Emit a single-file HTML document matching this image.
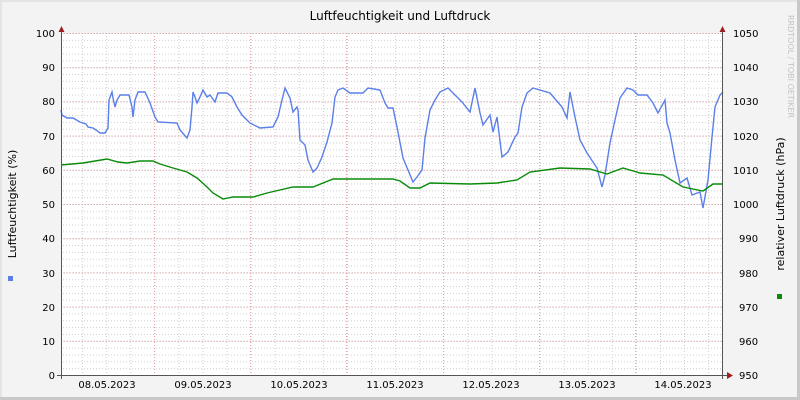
<!DOCTYPE html>
<html><head><meta charset="utf-8"><style>
html,body{margin:0;padding:0;width:800px;height:400px;overflow:hidden;background:#f3f3f3}
svg{display:block}
text{font-family:"DejaVu Sans","Liberation Sans",sans-serif;font-size:10px;fill:#000}
</style></head><body>
<svg width="800" height="400" viewBox="0 0 800 400" xmlns="http://www.w3.org/2000/svg">
<defs>
<pattern id="hmin" x="0" y="33" width="800" height="6.84" patternUnits="userSpaceOnUse">
<line x1="0" y1="0.5" x2="800" y2="0.5" stroke="#cfcfcf" stroke-width="1" stroke-dasharray="1,2"/>
</pattern>
<pattern id="vmin" x="58" y="0" width="24.08" height="400" patternUnits="userSpaceOnUse">
<line x1="0.5" y1="0" x2="0.5" y2="400" stroke="#cfcfcf" stroke-width="1" stroke-dasharray="1,2"/>
</pattern>
</defs>
<rect x="0" y="0" width="800" height="400" fill="#f3f3f3"/>
<rect x="0" y="0" width="800" height="2" fill="#e4e4e4"/>
<rect x="0" y="0" width="2" height="400" fill="#e4e4e4"/>
<rect x="797" y="0" width="3" height="400" fill="#c8c8c8"/>
<rect x="0" y="397" width="800" height="3" fill="#c8c8c8"/>
<rect x="61" y="33" width="662" height="342" fill="#fff"/>
<rect x="61" y="33" width="662" height="342" fill="url(#hmin)"/>
<rect x="61" y="33" width="662" height="342" fill="url(#vmin)"/>
<g stroke="#e9a5a5" stroke-width="1" stroke-dasharray="1,2">
<line x1="61" y1="33.5" x2="723" y2="33.5"/><line x1="61" y1="67.7" x2="723" y2="67.7"/>
<line x1="61" y1="101.9" x2="723" y2="101.9"/><line x1="61" y1="136.1" x2="723" y2="136.1"/>
<line x1="61" y1="170.3" x2="723" y2="170.3"/><line x1="61" y1="204.5" x2="723" y2="204.5"/>
<line x1="61" y1="238.7" x2="723" y2="238.7"/><line x1="61" y1="272.9" x2="723" y2="272.9"/>
<line x1="61" y1="307.1" x2="723" y2="307.1"/><line x1="61" y1="341.3" x2="723" y2="341.3"/>
<line x1="154.5" y1="33" x2="154.5" y2="375"/><line x1="250.5" y1="33" x2="250.5" y2="375"/>
<line x1="346.5" y1="33" x2="346.5" y2="375"/><line x1="443.5" y1="33" x2="443.5" y2="375"/>
<line x1="539.5" y1="33" x2="539.5" y2="375"/><line x1="635.5" y1="33" x2="635.5" y2="375"/>
</g>
<polyline fill="none" stroke="#5b7fe8" stroke-width="1.4" points="61,110 62,115 67,118 73,118 80,122 86,124 88,127 93,128 96,130 100,133 105,133 108,128 109,100 112,92 113,98 115,107 117,100 120,95 129,95 132,107 133,117 135,100 138,92 145,92 150,103 155,117 158,122 177,123 180,130 187,138 190,130 192,107 193,92 195,97 197,103 200,97 203,90 207,97 210,95 215,102 218,93 227,93 232,97 237,107 242,115 250,123 260,128 273,127 278,117 282,100 285,88 290,98 293,112 297,107 298,110 300,140 305,145 308,160 313,172 317,168 322,157 327,142 332,123 335,97 338,90 343,88 350,93 363,93 368,88 380,90 385,103 388,108 393,108 397,127 403,158 408,170 413,182 417,177 422,170 425,138 430,110 435,100 440,92 448,88 455,95 462,102 470,112 475,88 480,113 483,125 490,115 493,132 497,117 502,157 508,152 515,137 518,133 522,107 527,93 533,88 550,93 562,107 567,118 570,92 575,117 580,140 587,153 597,168 602,187 605,175 610,143 615,120 620,98 627,88 633,90 638,95 647,95 653,103 658,113 665,100 667,123 670,133 675,160 680,183 687,178 692,195 700,192 703,208 708,180 712,137 715,107 720,95 723,92"/>
<polyline fill="none" stroke="#0a8c0a" stroke-width="1.4" points="61,165 83,163 107,159 118,162 127,163 140,161 153,161 160,164 173,168 187,172 197,178 207,187 213,193 223,199 233,197 253,197 267,193 293,187 313,187 333,179 393,179 400,181 410,188 420,188 430,183 470,184 497,183 517,180 530,172 560,168 590,169 607,174 623,168 640,173 663,175 683,187 703,191 713,184 723,184"/>
<line x1="61.5" y1="28" x2="61.5" y2="379" stroke="#555" stroke-width="1"/>
<line x1="722.5" y1="28" x2="722.5" y2="379" stroke="#555" stroke-width="1"/>
<line x1="57" y1="375.5" x2="728" y2="375.5" stroke="#555" stroke-width="1"/>
<polygon points="58.5,32 64.5,32 61.5,26" fill="#a02020"/>
<polygon points="719.5,32 725.5,32 722.5,26" fill="#a02020"/>
<polygon points="727,372 727,379 733,375.5" fill="#a02020"/>
<text x="400" y="20" text-anchor="middle" style="font-size:12px">Luftfeuchtigkeit und Luftdruck</text>
<g text-anchor="end">
<text x="55" y="37">100</text><text x="55" y="71">90</text><text x="55" y="105">80</text><text x="55" y="140">70</text><text x="55" y="174">60</text><text x="55" y="208">50</text><text x="55" y="242">40</text><text x="55" y="277">30</text><text x="55" y="311">20</text><text x="55" y="345">10</text><text x="55" y="379">0</text>
</g>
<g>
<text x="733" y="37">1050</text><text x="733" y="71">1040</text><text x="733" y="105">1030</text><text x="733" y="140">1020</text><text x="733" y="174">1010</text><text x="733" y="208">1000</text><text x="739" y="242">990</text><text x="739" y="277">980</text><text x="739" y="311">970</text><text x="739" y="345">960</text><text x="739" y="379">950</text>
</g>
<g text-anchor="middle">
<text x="107" y="388">08.05.2023</text><text x="203" y="388">09.05.2023</text><text x="299" y="388">10.05.2023</text><text x="395" y="388">11.05.2023</text><text x="491" y="388">12.05.2023</text><text x="587" y="388">13.05.2023</text><text x="683" y="388">14.05.2023</text>
</g>
<text transform="translate(16,204) rotate(-90)" text-anchor="middle" style="font-size:11px">Luftfeuchtigkeit (%)</text>
<text transform="translate(784,204) rotate(-90)" text-anchor="middle" style="font-size:11px">relativer Luftdruck (hPa)</text>
<text transform="translate(788,15) rotate(90)" style="font-size:8px;fill:#c4c4c4">RRDTOOL / TOBI OETIKER</text>
<rect x="8" y="276" width="5" height="5" fill="#5b7fe8"/>
<rect x="777" y="294" width="5" height="5" fill="#0a8c0a"/>
</svg>
</body></html>
